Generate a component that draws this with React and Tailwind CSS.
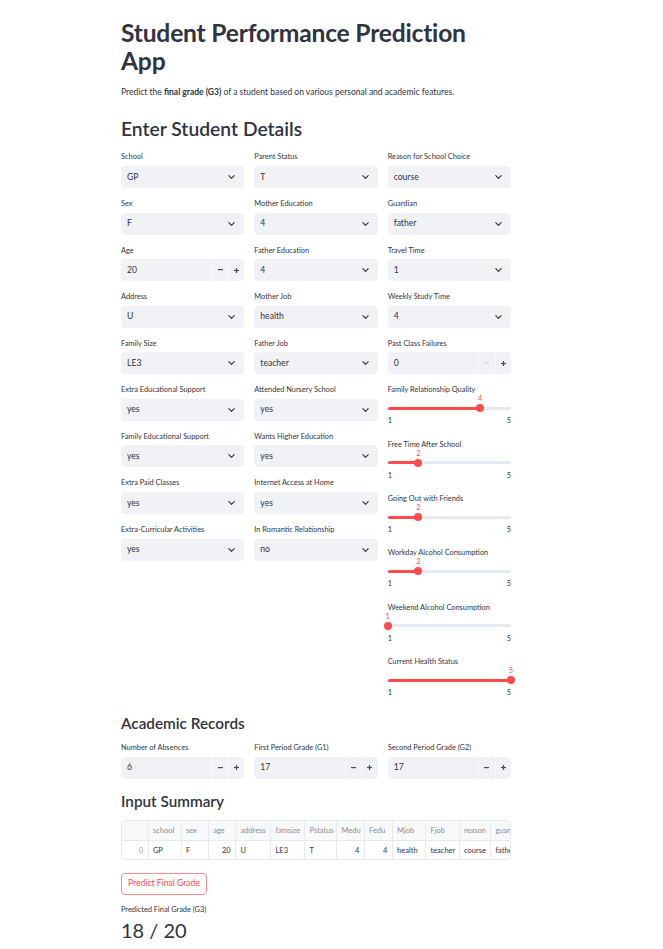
import React from "react";

const col1 = [
	{ label: "School", value: "GP" },
	{ label: "Sex", value: "F" },
	{ label: "Age", value: "20", number: true },
	{ label: "Address", value: "U" },
	{ label: "Family Size", value: "LE3" },
	{ label: "Extra Educational Support", value: "yes" },
	{ label: "Family Educational Support", value: "yes" },
	{ label: "Extra Paid Classes", value: "yes" },
	{ label: "Extra-Curricular Activities", value: "yes" },
];

const col2 = [
	{ label: "Parent Status", value: "T" },
	{ label: "Mother Education", value: "4" },
	{ label: "Father Education", value: "4" },
	{ label: "Mother Job", value: "health" },
	{ label: "Father Job", value: "teacher" },
	{ label: "Attended Nursery School", value: "yes" },
	{ label: "Wants Higher Education", value: "yes" },
	{ label: "Internet Access at Home", value: "yes" },
	{ label: "In Romantic Relationship", value: "no" },
];

const col3 = [
	{ label: "Reason for School Choice", value: "course" },
	{ label: "Guardian", value: "father" },
	{ label: "Travel Time", value: "1" },
	{ label: "Weekly Study Time", value: "4" },
	{ label: "Past Class Failures", value: "0", number: true, minDisabled: true },
];

const sliders = [
	{ label: "Family Relationship Quality", value: 4 },
	{ label: "Free Time After School", value: 2 },
	{ label: "Going Out with Friends", value: 2 },
	{ label: "Workday Alcohol Consumption", value: 2 },
	{ label: "Weekend Alcohol Consumption", value: 1 },
	{ label: "Current Health Status", value: 5 },
];

// summary table columns, widths measured off the screenshot
const columns = [
	{ name: "", w: 26, v: "0", right: true, muted: true },
	{ name: "school", w: 33, v: "GP" },
	{ name: "sex", w: 27.3, v: "F" },
	{ name: "age", w: 27.3, v: "20", right: true },
	{ name: "address", w: 35, v: "U" },
	{ name: "famsize", w: 34, v: "LE3" },
	{ name: "Pstatus", w: 32, v: "T" },
	{ name: "Medu", w: 27.6, v: "4", right: true },
	{ name: "Fedu", w: 28, v: "4", right: true },
	{ name: "Mjob", w: 33.4, v: "health" },
	{ name: "Fjob", w: 33.6, v: "teacher" },
	{ name: "reason", w: 31.4, v: "course" },
	{ name: "guardian", w: 40, v: "father" },
	{ name: "traveltime", w: 44, v: "1" },
];

const Label = ({ children }) => (
	<div className="h-[13.3px] mb-[2.2px] flex items-center text-[7.4px] leading-none text-[#31333f]">
		{children}
	</div>
);

const Chevron = () => (
	<svg width="7" height="4" viewBox="0 0 10 6" className="shrink-0">
		<path d="M1 1l4 4 4-4" fill="none" stroke="#31333f" strokeWidth="1.7" strokeLinecap="round" strokeLinejoin="round" />
	</svg>
);

const SelectBox = ({ label, value }) => (
	<div>
		<Label>{label}</Label>
		<div className="h-[22px] rounded-[4px] bg-[#f0f2f6] flex items-center justify-between pl-[6px] pr-[9px] text-[8.6px] text-[#31333f]">
			<span>{value}</span>
			<Chevron />
		</div>
	</div>
);

const NumberBox = ({ label, value, minDisabled }) => (
	<div>
		<Label>{label}</Label>
		<div className="h-[22px] rounded-[4px] bg-[#f0f2f6] flex items-stretch text-[8.6px] text-[#31333f] overflow-hidden">
			<div className="flex-1 flex items-center pl-[6px]">{value}</div>
			<div className="w-[16.5px] flex items-center justify-center border-l border-[#f8f9fb]">
				<svg width="5" height="2" viewBox="0 0 5 2">
					<rect width="5" height="1.2" fill={minDisabled ? "#d3d6dc" : "#4a4c56"} />
				</svg>
			</div>
			<div className="w-[16.5px] flex items-center justify-center border-l border-[#f8f9fb]">
				<svg width="5" height="5" viewBox="0 0 5 5">
					<rect y="1.9" width="5" height="1.2" fill="#4a4c56" />
					<rect x="1.9" width="1.2" height="5" fill="#4a4c56" />
				</svg>
			</div>
		</div>
	</div>
);

const Slider = ({ label, value }) => {
	const pct = ((value - 1) / 4) * 100;
	return (
		<div>
			<Label>{label}</Label>
			<div className="relative h-[29.8px] text-[7.4px] leading-[10px]">
				<div className="absolute left-0 right-0 top-[8px] h-[3px] rounded-full bg-[#e6e9ef]" />
				<div className="absolute left-0 top-[8px] h-[3px] rounded-full bg-[#ff4b4b]" style={{ width: `${pct}%` }} />
				<div
					className="absolute top-[5.4px] w-[8px] h-[8px] rounded-full bg-[#ff4b4b] -translate-x-1/2"
					style={{ left: `${pct}%` }}
				/>
				<div
					className="absolute top-[-4.6px] -translate-x-1/2 text-[#ff4b4b]"
					style={{ left: `${pct}%` }}
				>
					{value}
				</div>
				<div className="absolute left-0 top-[17.4px] text-[#31333f]">1</div>
				<div className="absolute right-0 top-[17.4px] text-[#31333f]">5</div>
			</div>
		</div>
	);
};

const Field = (f) => (f.number ? <NumberBox {...f} /> : <SelectBox {...f} />);

const App = () => {
	return (
		<div className="min-h-screen bg-white font-['Lato','Liberation_Sans',sans-serif] text-[#31333f]">
			<div className="pl-[121px] pt-[18.6px] w-[511px] pb-[12px]">
				<h1 className="text-[24.6px] leading-[28.6px] font-bold tracking-[-0.2px]">
					Student Performance Prediction App
				</h1>
				<p className="mt-[9.6px] text-[8.5px] leading-[14px]">
					Predict the <b>final grade (G3)</b> of a student based on various personal and academic features.
				</p>
				<h2 className="mt-[18px] text-[19.3px] leading-[24px] font-semibold">Enter Student Details</h2>

				<div className="mt-[9.1px] grid grid-cols-3 gap-x-[10px] items-start">
					<div className="flex flex-col gap-[9.1px]">
						{col1.map((f) => (
							<Field key={f.label} {...f} />
						))}
					</div>
					<div className="flex flex-col gap-[9.1px]">
						{col2.map((f) => (
							<Field key={f.label} {...f} />
						))}
					</div>
					<div className="flex flex-col gap-[9.1px]">
						{col3.map((f) => (
							<Field key={f.label} {...f} />
						))}
						{sliders.map((s) => (
							<Slider key={s.label} {...s} />
						))}
					</div>
				</div>

				<h3 className="mt-[13px] text-[15.3px] leading-[18.6px] font-semibold">Academic Records</h3>
				<div className="mt-[9.1px] grid grid-cols-3 gap-x-[10px]">
					<NumberBox label="Number of Absences" value="6" />
					<NumberBox label="First Period Grade (G1)" value="17" />
					<NumberBox label="Second Period Grade (G2)" value="17" />
				</div>

				<h3 className="mt-[13.8px] text-[15.3px] leading-[18.6px] font-semibold">Input Summary</h3>
				<div className="mt-[9.1px] h-[39.5px] rounded-[4px] border border-[#e6e9ef] overflow-hidden">
					<table className="table-fixed border-collapse text-[7.5px] leading-none whitespace-nowrap">
						<thead>
							<tr className="h-[19.7px] bg-[#f8f9fb]">
								{columns.map((c, i) => (
									<th
										key={i}
										style={{ width: c.w, minWidth: c.w, maxWidth: c.w }}
										className="font-normal text-left text-[#8b8d95] px-[4.4px] border-r border-b border-[#e6e9ef] overflow-hidden"
									>
										{c.name}
									</th>
								))}
							</tr>
						</thead>
						<tbody>
							<tr className="h-[19.7px]">
								{columns.map((c, i) => (
									<td
										key={i}
										style={{ width: c.w, minWidth: c.w, maxWidth: c.w }}
										className={`px-[4.4px] border-r border-[#e6e9ef] overflow-hidden ${c.right ? "text-right" : "text-left"} ${c.muted ? "text-[#9a9ca3]" : "text-[#31333f]"}`}
									>
										{c.v}
									</td>
								))}
							</tr>
						</tbody>
					</table>
				</div>

				<button className="mt-[13px] h-[22.4px] w-[86px] rounded-[4px] border border-[#ff8a8a] text-[#ff4b4b] text-[8.6px] bg-white">
					Predict Final Grade
				</button>

				<div className="mt-[9.1px] text-[7.4px] leading-[11px]">Predicted Final Grade (G3)</div>
				<div className="mt-[3px] text-[20px] leading-[24px]">18 / 20</div>
			</div>
		</div>
	);
};

export default App;
